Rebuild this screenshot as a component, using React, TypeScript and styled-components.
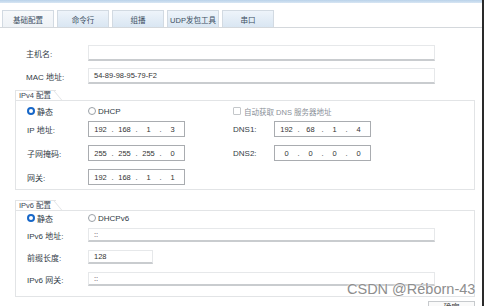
import React from "react";
import styled, { createGlobalStyle } from "styled-components";

const GlobalStyle = createGlobalStyle`
  html, body {
    margin: 0;
    padding: 0;
    background: #ffffff;
  }
  body {
    font-family: "Liberation Sans", "Noto Sans CJK SC", sans-serif;
    font-size: 8px;
    color: #333d48;
  }
`;

const Page = styled.div`
  position: relative;
  width: 482px;
  height: 306px;
  border-right: 2px solid #2a2a2a;
  overflow: hidden;
`;

const TopBar = styled.div`
  height: 3px;
  background: linear-gradient(#b9d2ea, #d8e6f3);
`;

const TabBar = styled.div`
  display: flex;
  gap: 3px;
  margin-top: 7px;
  padding-left: 2px;
  height: 17px;
  border-bottom: 1px solid #d4d8dc;
`;

const Tab = styled.div<{ $active?: boolean }>`
  width: 52px;
  height: 17px;
  box-sizing: border-box;
  border: 1px solid #d2dae2;
  border-bottom: none;
  background: ${(p) =>
    p.$active ? "linear-gradient(#f7f9fb, #eef2f6)" : "linear-gradient(#eef4fa, #d9e6f2)"};
  color: #3d5063;
  font-size: 7.5px;
  white-space: nowrap;
  display: flex;
  align-items: center;
  justify-content: center;
`;

const Body = styled.div`
  padding: 17px 0 0 15px;
  width: 460px;
`;

const Row = styled.div<{ $h?: number; $gap?: number }>`
  display: flex;
  align-items: center;
  height: ${(p) => p.$h ?? 16}px;
  margin-bottom: ${(p) => p.$gap ?? 7}px;
`;

const Label = styled.div<{ $w?: number; $pad?: number }>`
  width: ${(p) => p.$w ?? 73}px;
  padding-left: ${(p) => p.$pad ?? 11}px;
  box-sizing: border-box;
  flex-shrink: 0;
  color: #343d47;
  font-size: 8px;
`;

const TextBox = styled.div<{ $w?: number; $h?: number }>`
  width: ${(p) => p.$w ?? 347}px;
  height: ${(p) => p.$h ?? 16}px;
  box-sizing: border-box;
  border: 1px solid #e6e8ea;
  border-bottom: 2px solid #c9cccf;
  padding-left: 5px;
  display: flex;
  align-items: center;
  font-size: 7.5px;
  color: #333;
`;

const IpBox = styled.div`
  width: 97px;
  height: 16px;
  box-sizing: border-box;
  border: 1px solid #a9acb0;
  display: flex;
  align-items: center;
  padding-left: 3px;
  font-size: 7.5px;
  color: #333;
`;

const Seg = styled.span`
  width: 17px;
  text-align: center;
`;

const Dot = styled.span`
  width: 7px;
  text-align: center;
`;

const Legend = styled.div`
  position: relative;
  width: 41px;
  height: 10px;
  box-sizing: border-box;
  border-top: 1px solid #e2e4e6;
  border-left: 1px solid #e2e4e6;
  padding-left: 3px;
  font-size: 7.5px;
  line-height: 10px;
  white-space: nowrap;
  color: #3d4854;
  &::after {
    content: "";
    position: absolute;
    top: -1px;
    right: -7px;
    width: 7px;
    height: 10px;
    border-right: 1px solid #e2e4e6;
    border-top: 1px solid #e2e4e6;
    transform: skewX(40deg);
    transform-origin: bottom left;
  }
`;

const Group = styled.div<{ $h: number; $pad: number }>`
  width: 460px;
  height: ${(p) => p.$h}px;
  box-sizing: border-box;
  border: 1px solid #e2e4e6;
  padding-top: ${(p) => p.$pad}px;
`;

const Radio = styled.span<{ $on?: boolean }>`
  display: inline-block;
  width: 8px;
  height: 8px;
  box-sizing: border-box;
  border-radius: 50%;
  border: ${(p) => (p.$on ? "2.5px solid #1767c8" : "1px solid #9aa0a6")};
  background: #fff;
  margin-right: 2px;
`;

const Option = styled.div<{ $w: number }>`
  width: ${(p) => p.$w}px;
  flex-shrink: 0;
  display: flex;
  align-items: center;
  font-size: 8px;
  color: #303a44;
`;

const Check = styled.span`
  display: inline-block;
  width: 8px;
  height: 8px;
  box-sizing: border-box;
  border: 1px solid #c4c7ca;
  border-radius: 1px;
  margin-right: 3px;
`;

const Grey = styled.div`
  display: flex;
  align-items: center;
  color: #8a9098;
  font-size: 7.5px;
`;

const Col = styled.div`
  display: flex;
  align-items: center;
`;

const Spacer = styled.div<{ $w: number }>`
  width: ${(p) => p.$w}px;
  flex-shrink: 0;
`;

const Gap = styled.div<{ $h: number }>`
  height: ${(p) => p.$h}px;
`;

const Footer = styled.div`
  display: flex;
  justify-content: flex-end;
  padding-top: 4px;
`;

const Button = styled.div`
  width: 47px;
  height: 14px;
  box-sizing: border-box;
  border: 1px solid #c7cacd;
  background: #fafafa;
  font-size: 8px;
  text-align: center;
  line-height: 12px;
  color: #333;
`;

const Watermark = styled.div`
  position: absolute;
  left: 347px;
  top: 281px;
  font-family: "Liberation Sans", sans-serif;
  font-size: 14.5px;
  color: #8e8e8e;
  text-shadow: 0 0 2px #fff, 0 0 2px #fff;
  white-space: nowrap;
`;

const Ip: React.FC<{ v: string[] }> = ({ v }) => (
  <IpBox>
    {v.map((s, i) => (
      <React.Fragment key={i}>
        {i > 0 && <Dot>.</Dot>}
        <Seg>{s}</Seg>
      </React.Fragment>
    ))}
  </IpBox>
);

const App: React.FC = () => {
  const tabs = ["基础配置", "命令行", "组播", "UDP发包工具", "串口"];
  return (
    <>
      <GlobalStyle />
      <Page>
        <TopBar />
        <TabBar>
          {tabs.map((t, i) => (
            <Tab key={t} $active={i === 0}>
              {t}
            </Tab>
          ))}
        </TabBar>
        <Body>
          <Row>
            <Label>主机名:</Label>
            <TextBox />
          </Row>
          <Row $gap={6}>
            <Label>MAC 地址:</Label>
            <TextBox>54-89-98-95-79-F2</TextBox>
          </Row>
          <Legend>IPv4 配置</Legend>
          <Group $h={90} $pad={4}>
            <Row $h={12} $gap={4}>
              <Label $w={72}>
                <Option $w={50}>
                  <Radio $on />
                  静态
                </Option>
              </Label>
              <Option $w={145}>
                <Radio />
                DHCP
              </Option>
              <Grey>
                <Check />
                自动获取 DNS 服务器地址
              </Grey>
            </Row>
            <Row $gap={8}>
              <Label $w={72}>IP 地址:</Label>
              <Col>
                <Ip v={["192", "168", "1", "3"]} />
                <Spacer $w={48} />
                <Label $w={41} $pad={0}>DNS1:</Label>
                <Ip v={["192", "68", "1", "4"]} />
              </Col>
            </Row>
            <Row $gap={8}>
              <Label $w={72}>子网掩码:</Label>
              <Col>
                <Ip v={["255", "255", "255", "0"]} />
                <Spacer $w={48} />
                <Label $w={41} $pad={0}>DNS2:</Label>
                <Ip v={["0", "0", "0", "0"]} />
              </Col>
            </Row>
            <Row $gap={0}>
              <Label $w={72}>网关:</Label>
              <Ip v={["192", "168", "1", "1"]} />
            </Row>
          </Group>
          <Gap $h={10} />
          <Legend>IPv6 配置</Legend>
          <Group $h={87} $pad={1}>
            <Row $h={12} $gap={4}>
              <Label $w={72}>
                <Option $w={50}>
                  <Radio $on />
                  静态
                </Option>
              </Label>
              <Option $w={145}>
                <Radio />
                DHCPv6
              </Option>
            </Row>
            <Row $h={14} $gap={8}>
              <Label $w={72}>IPv6 地址:</Label>
              <TextBox $h={14}>::</TextBox>
            </Row>
            <Row $h={14} $gap={8}>
              <Label $w={72}>前缀长度:</Label>
              <TextBox $w={65} $h={14}>128</TextBox>
            </Row>
            <Row $h={14} $gap={0}>
              <Label $w={72}>IPv6 网关:</Label>
              <TextBox $h={14}>::</TextBox>
            </Row>
          </Group>
          <Footer>
            <Button>确定</Button>
          </Footer>
        </Body>
        <Watermark>CSDN @Réborn-43</Watermark>
      </Page>
    </>
  );
};

export default App;
